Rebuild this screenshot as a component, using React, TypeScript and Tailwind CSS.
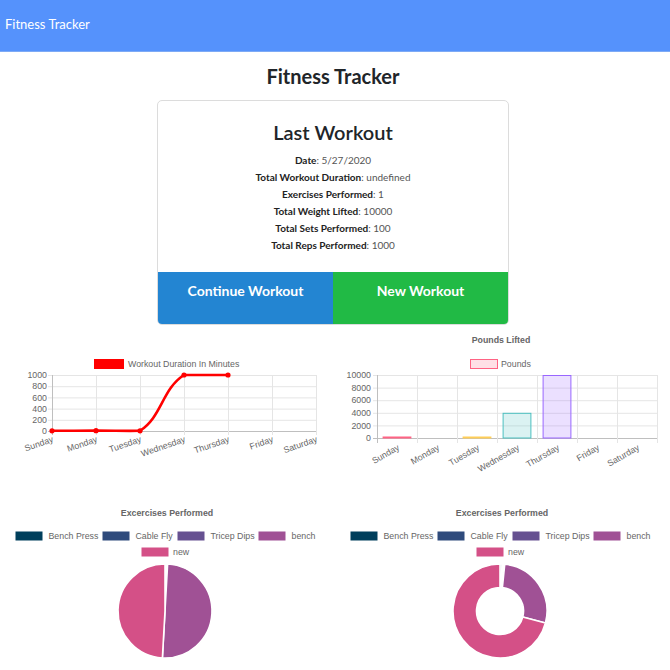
import React from "react";

const CF = '"Liberation Sans", Arial, Helvetica, sans-serif';
const GRID = "#e5e5e5";
const AXIS = "#bfbfbf";
const TXT = "#666666";
const FS = 8.8;

type P = { x: number; y: number };

function spline(pts: P[], t: number, yMin: number, yMax: number) {
  const cps = pts.map((cur, i) => {
    const prev = pts[i - 1] || cur;
    const next = pts[i + 1] || cur;
    const d01 = Math.hypot(cur.x - prev.x, cur.y - prev.y);
    const d12 = Math.hypot(next.x - cur.x, next.y - cur.y);
    let s01 = d01 / (d01 + d12);
    let s12 = d12 / (d01 + d12);
    if (isNaN(s01)) s01 = 0;
    if (isNaN(s12)) s12 = 0;
    const fa = t * s01;
    const fb = t * s12;
    const clamp = (v: number) => Math.max(yMin, Math.min(yMax, v));
    return {
      p: { x: cur.x - fa * (next.x - prev.x), y: clamp(cur.y - fa * (next.y - prev.y)) },
      n: { x: cur.x + fb * (next.x - prev.x), y: clamp(cur.y + fb * (next.y - prev.y)) },
    };
  });
  let d = `M${pts[0].x},${pts[0].y}`;
  for (let i = 1; i < pts.length; i++) {
    d += ` C${cps[i - 1].n.x},${cps[i - 1].n.y} ${cps[i].p.x},${cps[i].p.y} ${pts[i].x},${pts[i].y}`;
  }
  return d;
}

const DAYS = ["Sunday", "Monday", "Tuesday", "Wednesday", "Thursday", "Friday", "Saturday"];

function LineChart() {
  const x0 = 52, x1 = 316, yT = 46, yB = 102;
  const step = (x1 - x0) / 6;
  const data = [4, 6, 4, 1000, 1000];
  const pts = data.map((v, i) => ({ x: x0 + i * step, y: yB - (v / 1000) * (yB - yT) }));
  const ticks = [0, 200, 400, 600, 800, 1000];
  return (
    <svg width="335" height="165" style={{ fontFamily: CF }}>
      <rect x="94.5" y="30.5" width="29" height="9" fill="#ff0000" stroke="#ff0000" />
      <text x="128" y="37.5" fontSize={FS} fill={TXT}>Workout Duration In Minutes</text>
      {ticks.map((v) => {
        const y = yB - (v / 1000) * (yB - yT);
        return (
          <g key={v}>
            <line x1={x0 - 4} x2={x1} y1={y + 0.5} y2={y + 0.5} stroke={v === 0 ? AXIS : GRID} />
            <text x={47} y={y + 3.2} fontSize={FS} fill={TXT} textAnchor="end">{v}</text>
          </g>
        );
      })}
      {DAYS.map((d, i) => {
        const x = x0 + i * step;
        return (
          <g key={d}>
            <line x1={x + 0.5} x2={x + 0.5} y1={yT} y2={yB + 4} stroke={i === 0 ? AXIS : GRID} />
            <text
              x={x}
              y={yB + 11}
              fontSize={FS}
              fill={TXT}
              textAnchor="end"
              transform={`rotate(-19 ${x} ${yB + 5})`}
            >
              {d}
            </text>
          </g>
        );
      })}
      <path d={spline(pts, 0.4, yT, yB)} fill="none" stroke="#ff0000" strokeWidth="2.6" />
      {pts.map((p, i) => (
        <circle key={i} cx={p.x} cy={p.y} r="2.6" fill="#ff0000" />
      ))}
    </svg>
  );
}

function BarChart() {
  const x0 = 42, x1 = 322, yT = 46, yB = 109;
  const cw = (x1 - x0) / 7;
  const data = [150, 0, 150, 4000, 10000, 0, 0];
  const fills = [
    ["rgba(255,99,132,0.2)", "rgb(255,99,132)"],
    ["rgba(54,162,235,0.2)", "rgb(54,162,235)"],
    ["rgba(255,206,86,0.2)", "rgb(255,206,86)"],
    ["rgba(75,192,192,0.2)", "rgb(75,192,192)"],
    ["rgba(153,102,255,0.2)", "rgb(153,102,255)"],
    ["rgba(255,159,64,0.2)", "rgb(255,159,64)"],
    ["rgba(255,99,132,0.2)", "rgb(255,99,132)"],
  ];
  const ticks = [0, 2000, 4000, 6000, 8000, 10000];
  const bw = cw * 0.72;
  return (
    <svg width="335" height="165" style={{ fontFamily: CF }}>
      <text x="166" y="14" fontSize={FS} fill={TXT} fontWeight="bold" textAnchor="middle">Pounds Lifted</text>
      <rect x="135.5" y="30.5" width="27" height="9" fill="rgba(255,99,132,0.2)" stroke="rgb(255,99,132)" />
      <text x="166" y="37.5" fontSize={FS} fill={TXT}>Pounds</text>
      {ticks.map((v) => {
        const y = yB - (v / 10000) * (yB - yT);
        return (
          <g key={v}>
            <line x1={x0 - 4} x2={x1} y1={y + 0.5} y2={y + 0.5} stroke={v === 0 ? AXIS : GRID} />
            <text x={36} y={y + 3.2} fontSize={FS} fill={TXT} textAnchor="end">{v}</text>
          </g>
        );
      })}
      {Array.from({ length: 8 }).map((_, i) => {
        const x = x0 + i * cw;
        return <line key={i} x1={x + 0.5} x2={x + 0.5} y1={yT} y2={yB + 5} stroke={i === 0 ? AXIS : GRID} />;
      })}
      {data.map((v, i) => {
        if (v === 0) return null;
        const cx = x0 + (i + 0.5) * cw;
        const h = Math.max(1.5, (v / 10000) * (yB - yT));
        return (
          <rect
            key={i}
            x={cx - bw / 2 + 0.5}
            y={yB - h + 0.5}
            width={bw - 1}
            height={h - 0.5}
            fill={fills[i][0]}
            stroke={fills[i][1]}
            strokeWidth="1"
          />
        );
      })}
      {DAYS.map((d, i) => {
        const x = x0 + (i + 0.5) * cw;
        return (
          <text
            key={d}
            x={x}
            y={yB + 12}
            fontSize={FS}
            fill={TXT}
            textAnchor="end"
            transform={`rotate(-30 ${x} ${yB + 6})`}
          >
            {d}
          </text>
        );
      })}
    </svg>
  );
}

const PIE_COLORS = ["#003f5c", "#2f4b7c", "#665191", "#a05195", "#d45087"];
const PIE_LABELS = ["Bench Press", "Cable Fly", "Tricep Dips", "bench"];

function pt(cx: number, cy: number, r: number, deg: number) {
  const a = (deg * Math.PI) / 180;
  return { x: cx + r * Math.sin(a), y: cy - r * Math.cos(a) };
}

function PieChart({ degs, inner }: { degs: number[]; inner: number }) {
  const cx = 165, cy = 116, r = 47;
  let acc = 0;
  const slices = degs.map((d, i) => {
    const s = acc;
    const e = acc + d;
    acc = e;
    const large = d > 180 ? 1 : 0;
    const a = pt(cx, cy, r, s);
    const b = pt(cx, cy, r, e);
    let path: string;
    if (inner > 0) {
      const c = pt(cx, cy, inner, e);
      const f = pt(cx, cy, inner, s);
      path = `M${a.x},${a.y} A${r},${r} 0 ${large} 1 ${b.x},${b.y} L${c.x},${c.y} A${inner},${inner} 0 ${large} 0 ${f.x},${f.y} Z`;
    } else {
      path = `M${cx},${cy} L${a.x},${a.y} A${r},${r} 0 ${large} 1 ${b.x},${b.y} Z`;
    }
    return <path key={i} d={path} fill={PIE_COLORS[i]} stroke="#ffffff" strokeWidth="1.6" strokeLinejoin="round" />;
  });
  const boxX = [15.5, 102.5, 177.5, 258.5];
  return (
    <svg width="335" height="175" style={{ fontFamily: CF }}>
      <text x="167" y="21" fontSize={FS} fill={TXT} fontWeight="bold" textAnchor="middle">Excercises Performed</text>
      {PIE_LABELS.map((l, i) => (
        <g key={l}>
          <rect x={boxX[i]} y="36.5" width="27" height="9" fill={PIE_COLORS[i]} />
          <text x={boxX[i] + 33} y="44.2" fontSize={FS} fill={TXT}>{l}</text>
        </g>
      ))}
      <rect x="141.5" y="52.5" width="27" height="9" fill={PIE_COLORS[4]} />
      <text x="173" y="60" fontSize={FS} fill={TXT}>new</text>
      {slices}
    </svg>
  );
}

export default function App() {
  return (
    <div className="w-[670px] bg-white">
      <div className="h-[52px] bg-[#5592fc] border-b border-[#7eaaf5] px-[5px] pt-[11px]">
        <span className="text-white text-[13px] leading-[20px]" style={{ fontFamily: 'Lato, "Open Sans", sans-serif' }}>
          Fitness Tracker
        </span>
      </div>
      <div style={{ fontFamily: 'Lato, "Open Sans", sans-serif' }}>
        <h1 className="mt-[10px] mb-[10px] pr-[4px] text-center text-[20px] leading-[28px] font-bold text-[#212529]">
          Fitness Tracker
        </h1>
        <div className="ml-[157px] w-[352px] border border-[#dcdcdc] rounded-[5px] overflow-hidden">
          <div className="pt-[17px] pb-[18px] text-center">
            <h2 className="text-[20px] leading-[28px] font-semibold text-[#212529] mb-[6px]">Last Workout</h2>
            <div className="text-[10px] leading-[17px] text-[#555]">
              <div><span className="font-bold text-[#222]">Date</span>: 5/27/2020</div>
              <div><span className="font-bold text-[#222]">Total Workout Duration</span>: undefined</div>
              <div><span className="font-bold text-[#222]">Exercises Performed</span>: 1</div>
              <div><span className="font-bold text-[#222]">Total Weight Lifted</span>: 10000</div>
              <div><span className="font-bold text-[#222]">Total Sets Performed</span>: 100</div>
              <div><span className="font-bold text-[#222]">Total Reps Performed</span>: 1000</div>
            </div>
          </div>
          <div className="grid grid-cols-2 h-[52px]">
            <div className="bg-[#2385d2] flex items-center justify-center pb-[16px] text-white font-bold text-[14px]">
              Continue Workout
            </div>
            <div className="bg-[#21ba45] flex items-center justify-center pb-[16px] text-white font-bold text-[14px]">
              New Workout
            </div>
          </div>
        </div>
      </div>
      <div className="grid grid-cols-2 mt-[4px]">
        <LineChart />
        <BarChart />
        <div className="pt-[1px]">
          <PieChart degs={[0.6, 1.4, 1.2, 180, 176.8]} inner={0} />
        </div>
        <div className="pt-[1px]">
          <PieChart degs={[2.5, 1.8, 1.5, 99, 255.2]} inner={23.5} />
        </div>
      </div>
    </div>
  );
}
